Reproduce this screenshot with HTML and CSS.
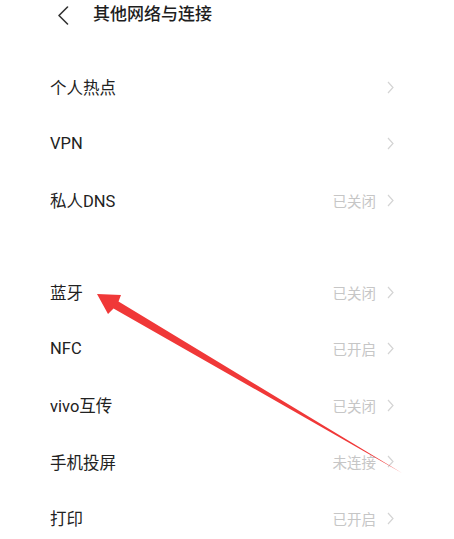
FILE: index.html
```html
<!DOCTYPE html>
<html lang="zh-CN">
<head>
  <meta charset="UTF-8" />
  <meta name="viewport" content="width=device-width, initial-scale=1.0" />
  <title>其他网络与连接</title>
  <link rel="stylesheet" href="styles.css">
</head>
<body>
  <header class="topbar">
    <svg class="back" width="12" height="19" viewBox="0 0 12 19">
      <path d="M10.5 1 L2 9.5 L10.5 18" fill="none" stroke="#333" stroke-width="1.6" stroke-linecap="round" stroke-linejoin="round"/>
    </svg>
    <h1>其他网络与连接</h1>
  </header>

  <div class="group">
    <div class="row"><span class="label">个人热点</span><span class="right"><svg class="chev" width="7" height="13" viewBox="0 0 7 13"><path d="M1 1 L6 6.5 L1 12" fill="none" stroke="#d4d4d4" stroke-width="1.2"/></svg></span></div>
    <div class="row"><span class="label">VPN</span><span class="right"><svg class="chev" width="7" height="13" viewBox="0 0 7 13"><path d="M1 1 L6 6.5 L1 12" fill="none" stroke="#d4d4d4" stroke-width="1.2"/></svg></span></div>
    <div class="row"><span class="label">私人DNS</span><span class="right"><span class="value">已关闭</span><svg class="chev" width="7" height="13" viewBox="0 0 7 13"><path d="M1 1 L6 6.5 L1 12" fill="none" stroke="#d4d4d4" stroke-width="1.2"/></svg></span></div>
  </div>

  <div class="group second">
    <div class="row"><span class="label">蓝牙</span><span class="right"><span class="value">已关闭</span><svg class="chev" width="7" height="13" viewBox="0 0 7 13"><path d="M1 1 L6 6.5 L1 12" fill="none" stroke="#d4d4d4" stroke-width="1.2"/></svg></span></div>
    <div class="row"><span class="label">NFC</span><span class="right"><span class="value">已开启</span><svg class="chev" width="7" height="13" viewBox="0 0 7 13"><path d="M1 1 L6 6.5 L1 12" fill="none" stroke="#d4d4d4" stroke-width="1.2"/></svg></span></div>
    <div class="row"><span class="label">vivo互传</span><span class="right"><span class="value">已关闭</span><svg class="chev" width="7" height="13" viewBox="0 0 7 13"><path d="M1 1 L6 6.5 L1 12" fill="none" stroke="#d4d4d4" stroke-width="1.2"/></svg></span></div>
    <div class="row"><span class="label">手机投屏</span><span class="right"><span class="value">未连接</span><svg class="chev" width="7" height="13" viewBox="0 0 7 13"><path d="M1 1 L6 6.5 L1 12" fill="none" stroke="#d4d4d4" stroke-width="1.2"/></svg></span></div>
    <div class="row"><span class="label">打印</span><span class="right"><span class="value">已开启</span><svg class="chev" width="7" height="13" viewBox="0 0 7 13"><path d="M1 1 L6 6.5 L1 12" fill="none" stroke="#d4d4d4" stroke-width="1.2"/></svg></span></div>
  </div>

  <!-- annotation arrow drawn over the list -->
  <svg class="arrow" width="454" height="539" viewBox="0 0 454 539">
    <polygon points="97,294 121,295 118.5,301.5 402,473 113.5,308.5 108,314" fill="#f03838"/>
  </svg>
</body>
</html>
```

FILE: styles.css
```css
body {
  margin: 0;
  padding: 0;
  background: #fff;
  color: #222;
  font-family: Roboto, "Noto Sans CJK SC", sans-serif;
  position: relative;
  width: 454px;
  height: 539px;
  overflow: hidden;
}
.topbar {
  display: flex;
  align-items: center;
  height: 28px;
  padding-left: 57px;
}
.topbar .back {
  margin-top: 2px;
}
.topbar h1 {
  margin: 0 0 0 24px;
  font-size: 17px;
  font-weight: 500;
  color: #1e1e1e;
  line-height: 1;
}
.group {
  margin-top: 31px;
}
.group.second {
  margin-top: 35.5px;
}
.row {
  display: flex;
  align-items: center;
  justify-content: space-between;
  height: 56.5px;
  padding: 0 60px 0 50px;
}
.label {
  font-size: 16.5px;
  color: #222;
}
.right {
  display: flex;
  align-items: center;
}
.value {
  font-size: 14.5px;
  color: #c6c6c6;
  margin-right: 11px;
}
.chev {
  display: block;
}
.arrow {
  position: absolute;
  left: 0;
  top: 0;
  pointer-events: none;
}
```
